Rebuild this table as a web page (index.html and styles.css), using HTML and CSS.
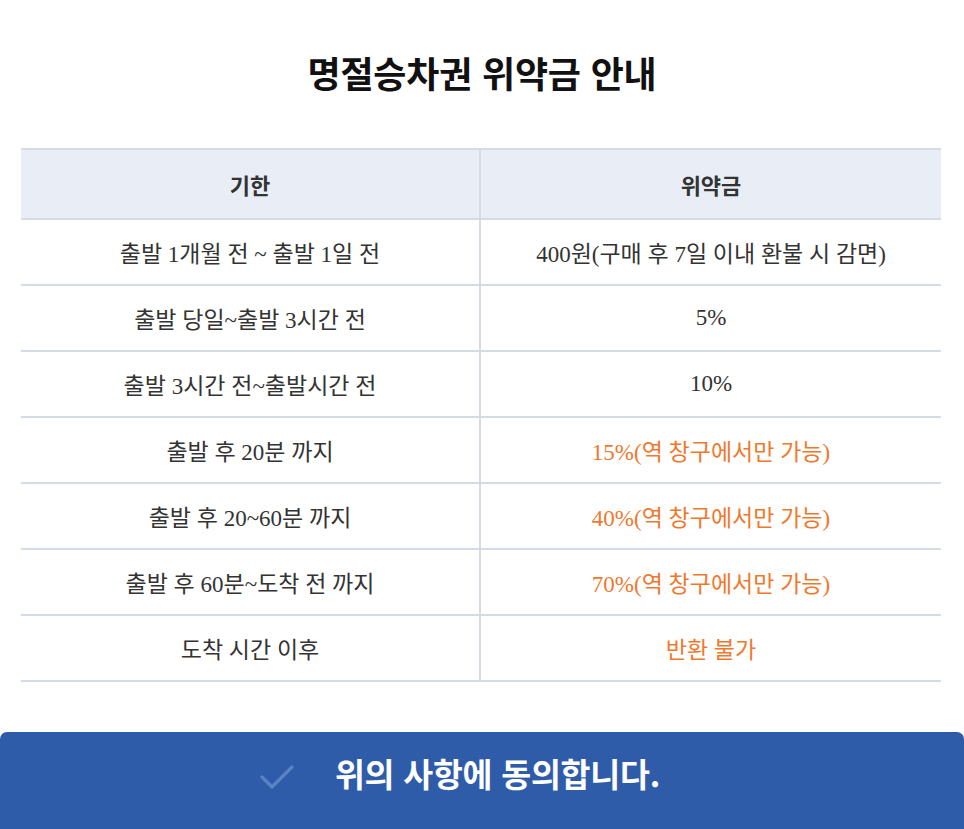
FILE: index.html
```html
<!DOCTYPE html>
<html lang="ko">
<head>
<meta charset="utf-8">
<title>명절승차권 위약금 안내</title>
<link rel="stylesheet" href="styles.css">
</head>
<body>
<main class="page">
  <h1 class="title">명절승차권 위약금 안내</h1>
  <div class="fee-table">
    <div class="cell head left">기한</div>
    <div class="cell head">위약금</div>

    <div class="cell left">출발 1개월 전 ~ 출발 1일 전</div>
    <div class="cell">400원(구매 후 7일 이내 환불 시 감면)</div>

    <div class="cell left">출발 당일~출발 3시간 전</div>
    <div class="cell">5%</div>

    <div class="cell left">출발 3시간 전~출발시간 전</div>
    <div class="cell">10%</div>

    <div class="cell left">출발 후 20분 까지</div>
    <div class="cell warn">15%(역 창구에서만 가능)</div>

    <div class="cell left">출발 후 20~60분 까지</div>
    <div class="cell warn">40%(역 창구에서만 가능)</div>

    <div class="cell left">출발 후 60분~도착 전 까지</div>
    <div class="cell warn">70%(역 창구에서만 가능)</div>

    <div class="cell left">도착 시간 이후</div>
    <div class="cell warn">반환 불가</div>
  </div>
  <button class="agree" type="button">
    <svg class="check" width="34" height="26" viewBox="0 0 34 26" aria-hidden="true">
      <path d="M2 12 L12 22 L32 2" fill="none" stroke="#5a83c7" stroke-width="3.2" stroke-linecap="round" stroke-linejoin="round"/>
    </svg>
    <span class="agree-text">위의 사항에 동의합니다.</span>
  </button>
</main>
</body>
</html>
```
FILE: styles.css
```css
html, body {
  margin: 0;
  padding: 0;
  background: #ffffff;
}

.page {
  width: 964px;
  padding-top: 46px;
  display: flex;
  flex-direction: column;
}

.title {
  margin: 0;
  height: 52px;
  line-height: 52px;
  text-align: center;
  font-family: "Noto Sans CJK KR", "Noto Sans", sans-serif;
  font-weight: 700;
  font-size: 36px;
  color: #111111;
  letter-spacing: -0.2px;
}

.fee-table {
  margin: 50px 0 0 21px;
  width: 920px;
  display: grid;
  grid-template-columns: 460px 460px;
  border-top: 2px solid #d5dbe6;
}

.cell {
  height: 64px;
  border-bottom: 2px solid #d5dbe6;
  display: flex;
  align-items: center;
  justify-content: center;
  font-family: "Liberation Serif", "Noto Sans CJK KR", serif;
  font-size: 23px;
  color: #333333;
}

.cell.left {
  border-right: 2px solid #d5dbe6;
  width: 458px;
}

.cell.head {
  height: 68px;
  background: #e9eef6;
  font-family: "Noto Sans CJK KR", "Noto Sans", sans-serif;
  font-weight: 700;
  font-size: 22px;
  color: #333333;
}

.cell.warn {
  color: #f0782d;
}

.agree {
  margin-top: 50px;
  width: 964px;
  height: 97px;
  border: none;
  border-radius: 7px 7px 0 0;
  background: #2f5ca9;
  display: flex;
  align-items: center;
  justify-content: center;
  gap: 41px;
  padding: 0 44px 16px 0;
  cursor: pointer;
}

.check {
  display: block;
  margin-top: 10px;
}

.agree-text {
  font-family: "Noto Sans CJK KR", "Noto Sans", sans-serif;
  font-weight: 700;
  font-size: 32.5px;
  color: #ffffff;
  letter-spacing: -0.2px;
}
```
